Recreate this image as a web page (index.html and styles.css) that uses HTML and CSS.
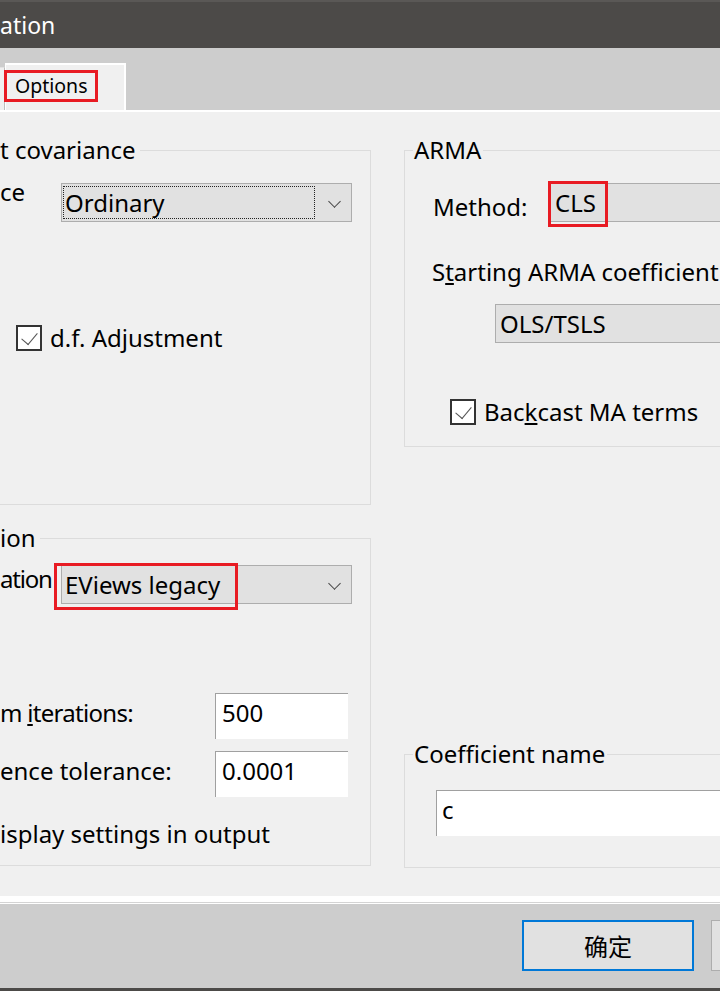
FILE: index.html
```html
<!DOCTYPE html>
<html>
<head>
<meta charset="utf-8">
<link rel="stylesheet" href="styles.css">
</head>
<body>
<div class="window">
  <div class="titlebar"><span class="title">ation</span></div>
  <div class="tabstrip">
    <div class="tab-stub"></div>
    <div class="tab active">Options</div>
    <div class="mark mark-tab"></div>
  </div>
  <div class="panel">
    <div class="col col-left">
      <fieldset class="group g-cov">
        <legend>t covariance</legend>
        <div class="row row-drop">
          <span class="lbl">ce</span>
          <div class="combo"><span class="combo-text focus">Ordinary</span><span class="chev"></span></div>
        </div>
        <label class="check check-df"><span class="box"></span><span>d.f. Adjustment</span></label>
      </fieldset>
      <fieldset class="group g-opt">
        <legend>ion</legend>
        <div class="row row-drop row-evi">
          <span class="lbl lbl-tight">ation</span>
          <div class="combo"><span class="combo-text">EViews legacy</span><span class="chev"></span></div>
          <div class="mark mark-evi"></div>
        </div>
        <div class="row row-field row-iter">
          <span class="lbl lbl-tight2">m <u>i</u>terations:</span>
          <div class="edit">500</div>
        </div>
        <div class="row row-field row-tol">
          <span class="lbl">ence tolerance:</span>
          <div class="edit">0.0001</div>
        </div>
        <div class="plain row-disp">isplay settings in output</div>
      </fieldset>
    </div>
    <div class="col col-right">
      <fieldset class="group g-arma">
        <legend>ARMA</legend>
        <div class="row row-method">
          <span class="lbl">Method:</span>
          <div class="combo combo-wide"><span class="combo-text">CLS</span></div>
          <div class="mark mark-cls"></div>
        </div>
        <div class="plain row-start">S<u>t</u>arting ARMA coefficient</div>
        <div class="combo combo-ols"><span class="combo-text">OLS/TSLS</span></div>
        <label class="check check-back"><span class="box"></span><span>Bac<u>k</u>cast MA terms</span></label>
      </fieldset>
      <fieldset class="group g-coef">
        <legend>Coef<u>f</u>icient name</legend>
        <div class="edit edit-coef">c</div>
      </fieldset>
    </div>
  </div>
  <div class="footer">
    <div class="btn btn-ok">确定</div>
    <div class="btn btn-next"></div>
  </div>
</div>
</body>
</html>
```
FILE: styles.css
```css
* { box-sizing: border-box; }
html, body { margin: 0; padding: 0; }
body {
  width: 720px;
  height: 991px;
  overflow: hidden;
  background: #f0f0f0;
  font-family: "Noto Sans", "Open Sans", "Noto Sans CJK SC", sans-serif;
  font-size: 24px;
  color: #000;
}
.window { width: 720px; height: 991px; overflow: hidden; display: flex; flex-direction: column; }

.titlebar {
  height: 48px;
  background: #4c4a48;
  border-top: 2px solid #5a5856;
  color: #fff;
  display: flex;
  align-items: center;
  font-size: 23px;
}
.title { line-height: 30px; }

.tabstrip {
  position: relative;
  height: 62px;
  background: #cdcdcd;
  display: flex;
  align-items: flex-end;
}
.tab-stub {
  width: 5px;
  height: 43px;
  background: #f0f0f0;
  border-top: 1px solid #e3e3e3;
  border-right: 1px solid #bdbdbd;
}
.tab {
  width: 121px;
  height: 47px;
  background: #f0f0f0;
  border-top: 2px solid #fff;
  border-right: 2px solid #fff;
  border-left: 1px solid #fff;
  font-size: 19.5px;
  line-height: 26px;
  padding: 8px 0 0 9px;
}
.mark {
  position: absolute;
  border: 3px solid #e81b23;
  pointer-events: none;
}
.mark-tab { left: 4px; top: 22px; width: 94px; height: 32px; }

.panel {
  height: 786px;
  border-top: 2px solid #fff;
  display: grid;
  grid-template-columns: 371px 1fr;
  column-gap: 33px;
  padding-top: 23px;
  padding-bottom: 28px;
}
.col { display: flex; flex-direction: column; }
.col-left { gap: 18px; }
.col-right { justify-content: space-between; width: 360px; }

.group {
  margin: 0;
  padding: 0;
  min-width: 0;
  border: 1px solid #dcdcdc;
  position: relative;
}
.col-left .group { border-left: none; margin-left: -2px; }
.group legend {
  padding: 0 2px 0 0;
  line-height: 30px;
  font-size: 24px;
}
.col-left .group legend { padding: 0 4px 0 2px; }
.col-right .group legend { margin-left: 8px; padding: 0 2px 0 1px; }

.g-cov { height: 370px; }
.g-opt { height: 343px; }
.g-arma { height: 312px; }
.g-coef { height: 129px; }

.row { display: grid; align-items: start; position: relative; }
.lbl { line-height: 28px; white-space: nowrap; }
.lbl-tight { letter-spacing: -1.2px; }
.lbl-tight2 { letter-spacing: -0.7px; }

.row-drop { grid-template-columns: 61px 291px; margin-top: 18px; margin-left: 2px; }
.row-drop .lbl { margin-top: -5px; }
.row-evi { margin-top: 12px; }
.row-evi .lbl { margin-top: 0; }

.combo {
  height: 39px;
  background: #e1e1e1;
  border: 1px solid #adadad;
  display: flex;
  align-items: center;
  position: relative;
  padding: 0 0 0 1px;
}
.combo-text {
  flex: 1;
  height: 33px;
  line-height: 31px;
  padding-left: 1px;
  margin-right: 36px;
  border: 1px solid transparent;
  white-space: nowrap;
}
.combo-text.focus { border: 1px dotted #222; }
.chev {
  position: absolute;
  right: 12px;
  top: 13px;
  width: 9px;
  height: 9px;
  border-right: 1.3px solid #444;
  border-bottom: 1.3px solid #444;
  transform: rotate(45deg);
}

.check { display: flex; align-items: center; gap: 8px; line-height: 28px; }
.box {
  width: 26px;
  height: 26px;
  border: 2px solid #333;
  background: #fff;
  position: relative;
  flex: none;
}
.box::after {
  content: "";
  position: absolute;
  left: 7px;
  top: 2px;
  width: 8px;
  height: 14px;
  border-right: 1.5px solid #555;
  border-bottom: 1.5px solid #555;
  transform: rotate(40deg);
}
.check-df { margin-top: 102px; margin-left: 18px; }

.row-field { grid-template-columns: 215px 133px; margin-left: 2px; }
.row-field .lbl { margin-top: 6px; }
.row-iter { margin-top: 89px; }
.row-tol { margin-top: 12px; }
.edit {
  height: 46px;
  background: #fff;
  border-top: 1px solid #a0a0a0;
  border-left: 1px solid #a0a0a0;
  padding-left: 6px;
  line-height: 38px;
}
.plain { line-height: 30px; white-space: nowrap; }
.row-disp { margin-top: 22px; margin-left: 2px; }

.mark-evi { left: 54px; top: -2px; width: 184px; height: 47px; }

.row-method { grid-template-columns: 115px 320px; margin-top: 18px; margin-left: 28px; }
.row-method .lbl { margin-top: 10px; }
.combo-wide .combo-text { margin-right: 0; padding-left: 4px; }
.mark-cls { left: 115px; top: -2px; width: 60px; height: 46px; }
.row-start { margin-top: 35px; margin-left: 27px; }
.combo-ols { margin-top: 17px; margin-left: 90px; width: 300px; }
.combo-ols .combo-text { margin-right: 0; padding-left: 2px; }
.check-back { margin-top: 55px; margin-left: 45px; }

.edit-coef { margin-top: 21px; margin-left: 31px; width: 330px; padding-left: 5px; }

.footer {
  flex: 1;
  background: #cdcdcd;
  border-top: 8px solid #fff;
  box-shadow: inset 0 -3px 0 #4c4a48;
  display: flex;
  align-items: flex-start;
  gap: 17px;
  padding: 16px 0 0 522px;
  position: relative;
}
.footer::before {
  content: "";
  position: absolute;
  left: 0; right: 0; top: -2px;
  height: 1px;
  background: #d4d4d4;
}
.btn {
  flex: none;
  width: 172px;
  height: 51px;
  background: #e1e1e1;
  border: 1px solid #adadad;
  font-family: "Noto Sans CJK SC", "Noto Sans", sans-serif;
  font-size: 24px;
  line-height: 47px;
  text-align: center;
  color: #000;
}
.btn-ok { border: 2px solid #0078d7; }
```
